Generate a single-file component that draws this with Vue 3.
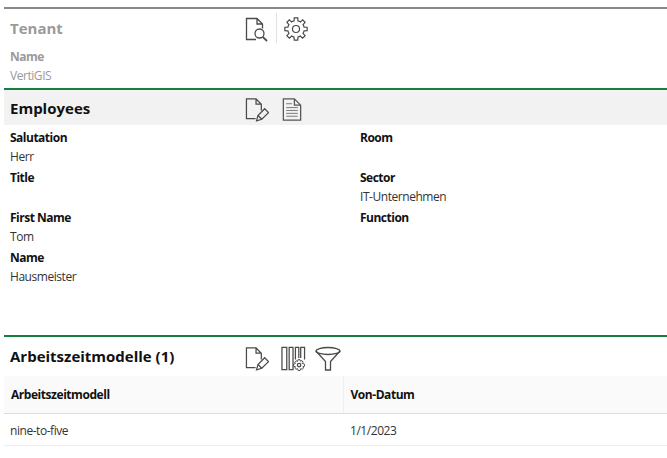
<template>
  <div class="page">
    <!-- Tenant -->
    <section class="panel panel--tenant">
      <header class="head head--tenant">
        <h2 class="title">Tenant</h2>
        <div class="tools tools--tenant">
          <svg class="icon" width="23" height="25" viewBox="0 0 23 25">
            <path d="M11 22.500H1.500V1.500H12L17.500 7V11.500M12 1.500V7H17.500" />
            <circle cx="14.500" cy="16.500" r="4.500" />
            <path d="M17.700 19.800L22 24" stroke-width="1.800" />
          </svg>
          <span class="sep"></span>
          <svg class="icon" width="24" height="24" viewBox="0 0 26 26">
            <path :d="gearPath" />
            <circle cx="13" cy="13" r="3.800" />
          </svg>
        </div>
      </header>
      <div class="field">
        <div class="label">Name</div>
        <div class="value">VertiGIS</div>
      </div>
    </section>

    <!-- Employees -->
    <section class="panel panel--green">
      <header class="head head--grey">
        <h2 class="title">Employees</h2>
        <div class="tools tools--gap">
          <svg class="icon" width="24" height="25" viewBox="0 0 25 26">
            <path d="M11 22.500H1.500V2H11.500L17 7.500V14M11.500 2V7.500H17" />
            <path d="M12 24.800L13.500 19.200L20.500 12.200L24.500 16.200L17.500 23.200Z" />
            <path d="M13.500 19.200L17.500 23.200" />
          </svg>
          <svg class="icon icon--doc" width="20" height="25" viewBox="0 0 20 26">
            <path d="M1 2H12.500L19 8.500V24H1ZM12.500 2V8.500H19" />
            <path class="thin" d="M4 7H10M4 11H16M4 14H16M4 17H16M4 20H16" />
          </svg>
        </div>
      </header>
      <div class="fields">
        <div class="field" v-for="f in employeeFields" :key="f.label">
          <div class="label">{{ f.label }}</div>
          <div class="value">{{ f.value }}</div>
        </div>
      </div>
    </section>

    <!-- Arbeitszeitmodelle -->
    <section class="panel panel--green">
      <header class="head head--tall">
        <h2 class="title">Arbeitszeitmodelle (1)</h2>
        <div class="tools tools--gap2">
          <svg class="icon" width="24" height="25" viewBox="0 0 25 26">
            <path d="M11 22.500H1.500V2H11.500L17 7.500V14M11.500 2V7.500H17" />
            <path d="M12 24.800L13.500 19.200L20.500 12.200L24.500 16.200L17.500 23.200Z" />
            <path d="M13.500 19.200L17.500 23.200" />
          </svg>
          <svg class="icon" width="25" height="25" viewBox="0 0 26 26">
            <path d="M1 1.500H6V24.500H1ZM8.500 1.500H12.500V24.500H8.500ZM15 14V1.500H18.500V12.500M20.500 12.500V1.500H24.500V14" />
            <circle cx="18.800" cy="19.800" r="1.800" />
            <path d="M17.800 14.200H19.800L20.200 15.800L21.800 15.200L23 16.800L22 18L24.500 19V21L22.800 21.500L23.500 23L22 24.200L20.500 23.500L19.800 25.500H17.800L17.200 23.500L15.600 24.200L14.300 23L15 21.500L13 21V19L15 18.200L14.300 16.800L15.600 15.400L17.200 16Z" stroke-width="1" />
          </svg>
          <svg class="icon icon--funnel" width="26" height="25" viewBox="0 0 26 25">
            <ellipse cx="13" cy="5" rx="12" ry="3.500" />
            <path d="M1 5L10.500 15.500V24H15.500V15.500L25 5" />
          </svg>
        </div>
      </header>
      <table class="grid">
        <thead>
          <tr>
            <th class="col-a">Arbeitszeitmodell</th>
            <th>Von-Datum</th>
          </tr>
        </thead>
        <tbody>
          <tr>
            <td>nine-to-five</td>
            <td>1/1/2023</td>
          </tr>
        </tbody>
      </table>
    </section>
  </div>
</template>

<script setup>
const employeeFields = [
  { label: "Salutation", value: "Herr" },
  { label: "Room", value: "" },
  { label: "Title", value: "" },
  { label: "Sector", value: "IT-Unternehmen" },
  { label: "First Name", value: "Tom" },
  { label: "Function", value: "" },
  { label: "Name", value: "Hausmeister" },
];

// cog outline: eight flat teeth joined by arcs along the root circle
function buildGear() {
  const cx = 13;
  const cy = 13;
  const teeth = 8;
  const step = (Math.PI * 2) / teeth;
  const rootR = 9;
  const tipR = 12.2;
  const at = (r, t) =>
    `${(cx + r * Math.cos(t)).toFixed(2)} ${(cy + r * Math.sin(t)).toFixed(2)}`;
  let d = "";
  for (let i = 0; i < teeth; i++) {
    const a = i * step - Math.PI / 2;
    d += `${i === 0 ? "M" : "L"}${at(rootR, a - step * 0.3)}`;
    d += `L${at(tipR, a - step * 0.2)}`;
    d += `L${at(tipR, a + step * 0.2)}`;
    d += `L${at(rootR, a + step * 0.3)}`;
    d += `A${rootR} ${rootR} 0 0 1 ${at(rootR, a + step * 0.7)}`;
  }
  return d + "Z";
}
const gearPath = buildGear();
</script>

<style>
html,
body {
  margin: 0;
  background: #fff;
}
</style>

<style scoped>
.page {
  width: 667px;
  height: 458px;
  overflow: hidden;
  padding: 7px 0 0 4px;
  box-sizing: border-box;
  font-family: "Open Sans", "Noto Sans", sans-serif;
  font-size: 12px;
  letter-spacing: -0.45px;
  color: #222;
  background: #fff;
}
.panel {
  border-top: 2px solid #8a8a8a;
}
.panel--green {
  border-top-color: #15803d;
}
.panel--tenant {
  height: 81px;
  box-sizing: border-box;
}
.panel--tenant .title,
.panel--tenant .label {
  color: #9a9a9a;
}
.panel--tenant .value {
  color: #999;
}
.head {
  height: 35px;
  display: flex;
  align-items: center;
  padding-left: 6px;
}
.head--tenant {
  height: 37px;
}
.head--grey {
  background: #f2f2f2;
}
.head--tall {
  height: 39px;
}
.head--tall .title {
  margin-bottom: 2px;
}
.title {
  width: 235px;
  flex: none;
  margin: 0;
  font-size: 15px;
  font-weight: 700;
  letter-spacing: 0;
  color: #111;
}
.tools {
  display: flex;
  align-items: center;
}
.tools--gap {
  gap: 13px;
}
.tools--gap2 {
  gap: 12px;
}
.tools .icon {
  margin-top: 4px;
}
.tools--tenant .icon {
  margin-top: 3px;
}
.tools .icon--funnel {
  margin-left: -3px;
}
.sep {
  width: 1px;
  height: 30px;
  background: #e2e2e2;
  margin: 0 7px 0 8px;
}
.icon {
  display: block;
  flex: none;
  fill: none;
  stroke: #4a4a4a;
  stroke-width: 1.3;
}
.icon--doc {
  stroke: #555;
}
.thin {
  stroke-width: 1;
  stroke: #777;
}
.fields {
  display: grid;
  grid-template-columns: 350px 1fr;
  padding-top: 3px;
  height: 207px;
  align-content: start;
}
.field {
  height: 40px;
  padding-left: 6px;
}
.panel--tenant .field {
  padding-top: 1px;
}
.label {
  height: 19px;
  line-height: 19px;
  font-weight: 700;
  letter-spacing: -0.5px;
  color: #111;
}
.value {
  height: 19px;
  line-height: 19px;
  color: #333;
}
.grid {
  width: 100%;
  border-collapse: collapse;
  table-layout: fixed;
}
.grid th {
  height: 37px;
  padding: 0 7px;
  box-sizing: border-box;
  text-align: left;
  font-weight: 700;
  font-size: 12px;
  letter-spacing: -0.45px;
  color: #111;
  background: #fafafa;
  border-bottom: 1px solid #ddd;
}
.grid .col-a {
  width: 339px;
  border-right: 1px solid #efefef;
}
.grid td {
  height: 32px;
  padding: 2px 6px 0;
  box-sizing: border-box;
  color: #333;
  border-bottom: 1px solid #eee;
}
.grid td + td {
  padding-left: 7px;
}
</style>
